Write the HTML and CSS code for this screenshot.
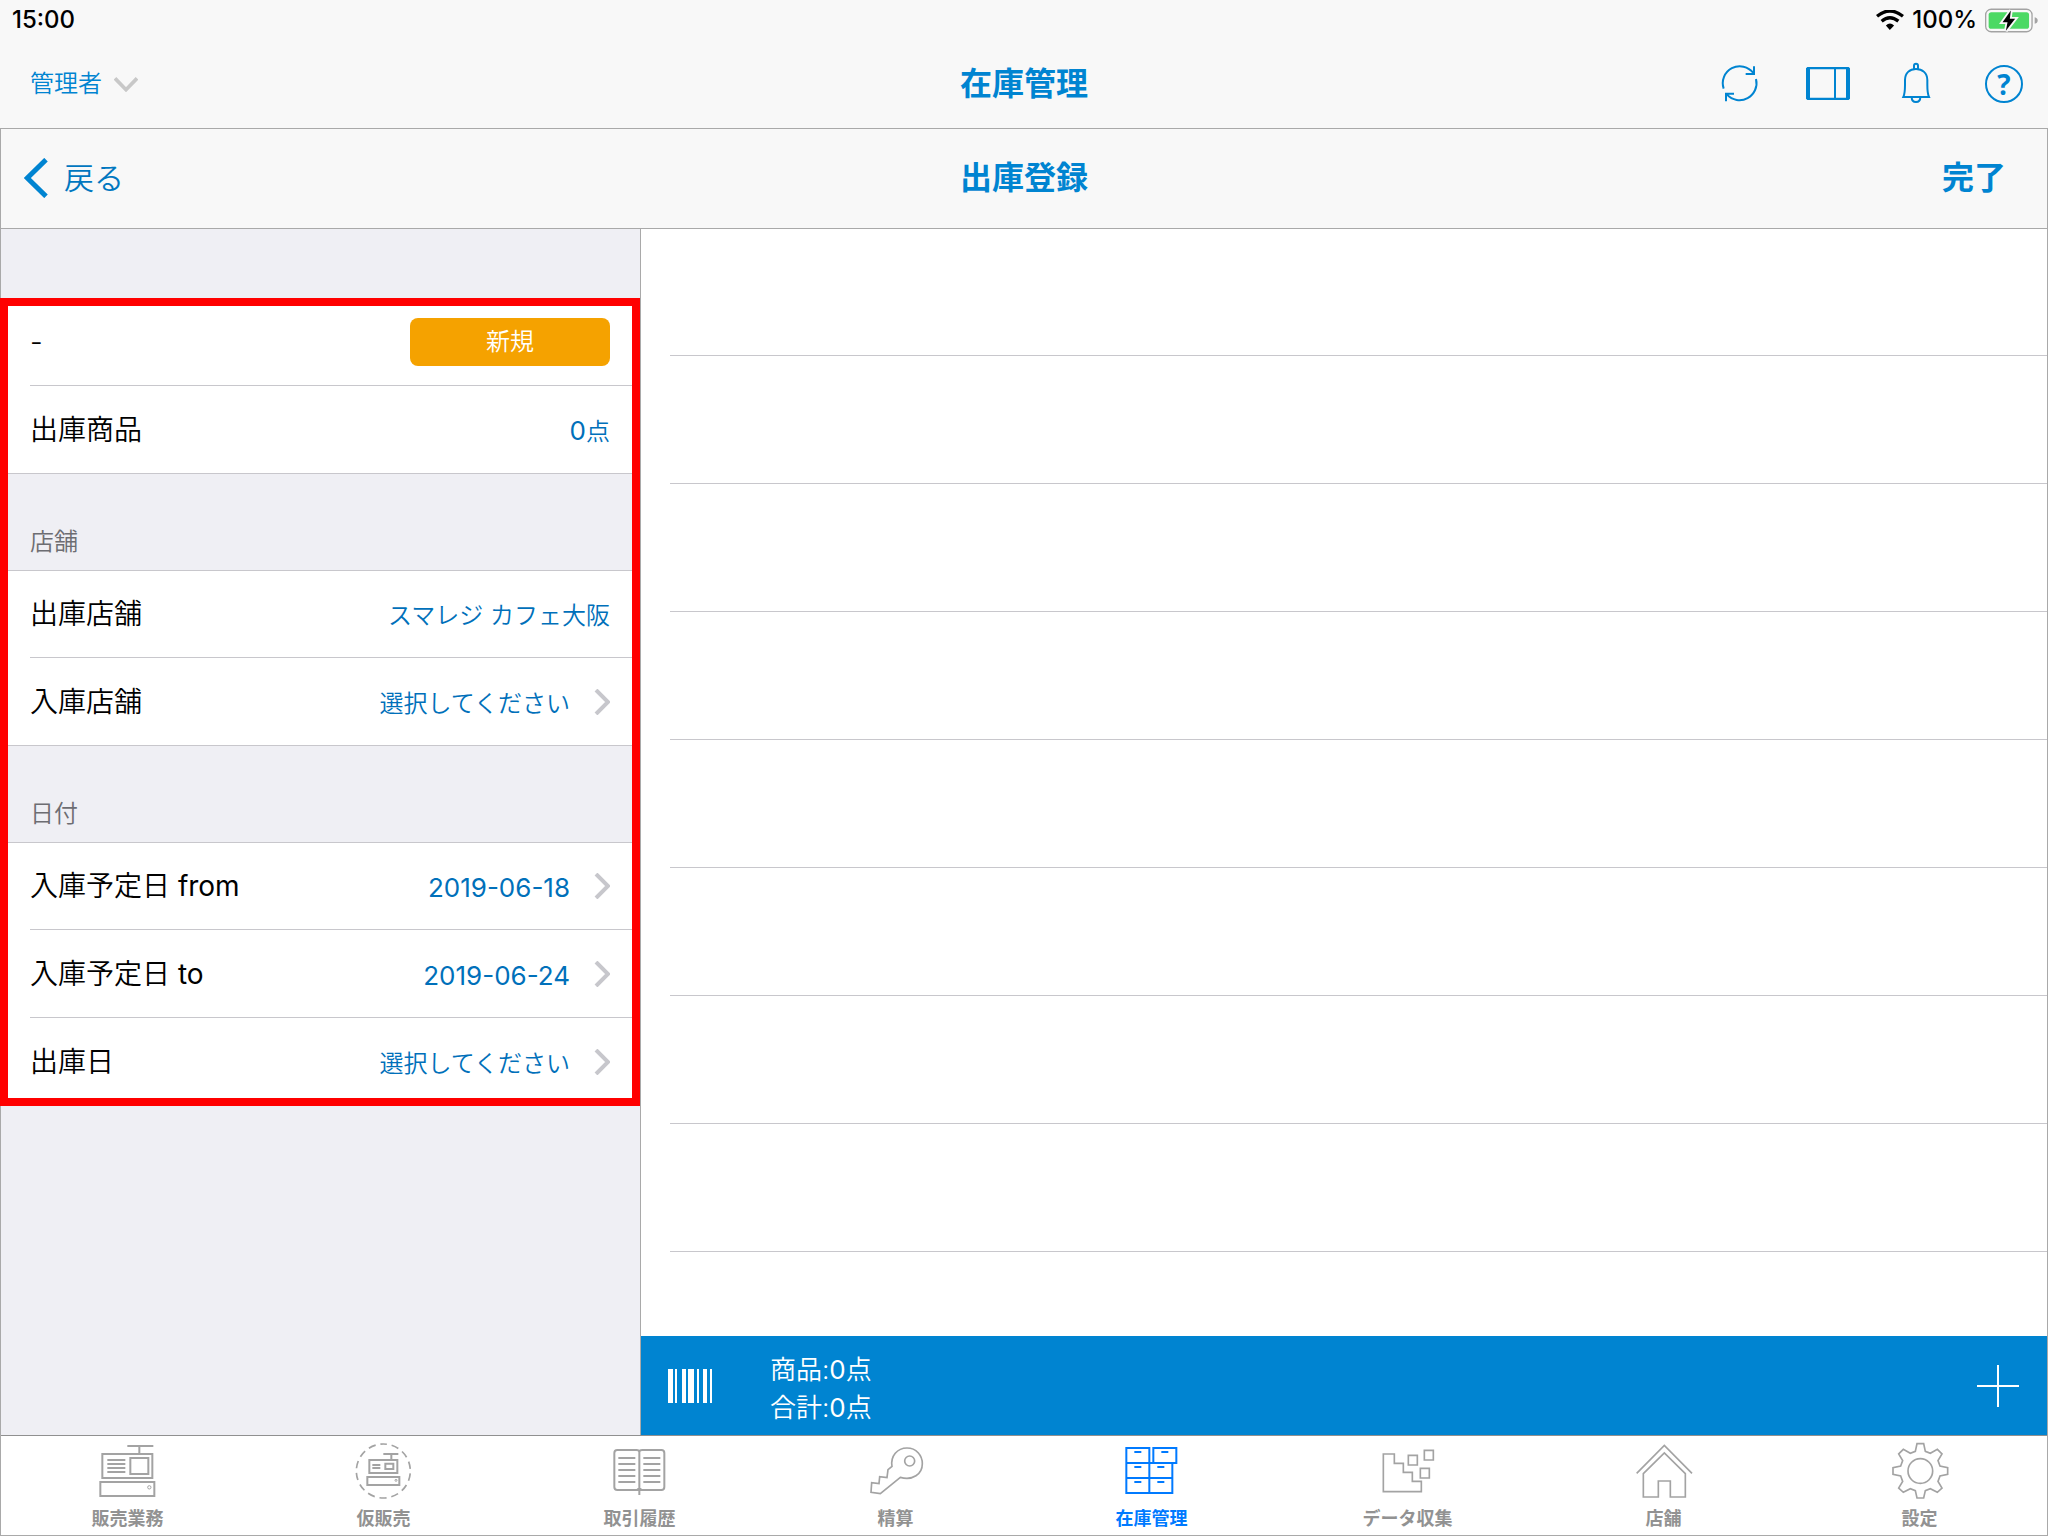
FILE: index.html
```html
<!DOCTYPE html>
<html lang="ja">
<head>
<meta charset="utf-8">
<meta name="viewport" content="width=device-width, initial-scale=1">
<title>在庫管理 - 出庫登録</title>
<link rel="stylesheet" href="styles.css">
</head>
<body>
<div class="app">
  <header class="top">
    <div class="status">
      <time class="clock">15:00</time>
      <div class="status-right">
        <svg class="wifi" viewBox="592 29 83 61" aria-hidden="true">
          <path d="M594 48Q633 16 673 48" fill="none" stroke="#000" stroke-width="10"/>
          <path d="M608 63Q633 42 659 63" fill="none" stroke="#000" stroke-width="10"/>
          <path d="M621 76Q633 65 646 76L633 90Z"/>
        </svg>
        <span class="percent">100%</span>
        <svg class="battery" viewBox="915 23 160 74" aria-hidden="true">
          <rect x="917" y="26" width="140" height="68" rx="17" fill="none" stroke="#a3a3a3" stroke-width="4"/>
          <path d="M1065 50Q1074 52 1074 60T1065 70Z" fill="#a3a3a3"/>
          <rect x="926" y="35" width="122" height="50" rx="8" fill="#4cd964"/>
          <path d="M993 30L968 65H983L978 91L1006 55H990Z" fill="#000" stroke="#f8f8f8" stroke-width="11" paint-order="stroke"/>
        </svg>
      </div>
    </div>
    <div class="toolbar">
      <div class="side">
        <button class="user" type="button">管理者
          <svg class="down" viewBox="342 231 72 45" aria-hidden="true"><path d="M345 235L378 269L411 235" fill="none" stroke="#c8c8c8" stroke-width="11"/></svg>
        </button>
      </div>
      <h1 class="title">在庫管理</h1>
      <div class="side tools">
        <button class="tool" type="button" aria-label="更新">
          <svg class="tool-icon" viewBox="120 192 120 120"><g fill="none" stroke="#0084d1" stroke-width="6"><path d="M131 266A51 51 0 0 1 220 219M228 237A51 51 0 0 1 141 284M222 199V222H197M138 304V281H162"/></g></svg>
        </button>
        <button class="tool" type="button" aria-label="パネル表示">
          <svg class="tool-icon wide" viewBox="378 192 132 120"><path fill="#0084d1" fill-rule="evenodd" d="M382 201H506L510 205V296L506 300H382L378 296V205ZM390 208V293H462V208ZM468 208V293H498V208Z"/></svg>
        </button>
        <button class="tool" type="button" aria-label="お知らせ">
          <svg class="tool-icon" viewBox="648 192 120 120"><g fill="none" stroke="#0084d1" stroke-width="6"><path d="M670 291C675 280 675 270 675 255V240C675 219 689 207 708 207S742 219 742 240V255C742 270 742 280 747 291ZM702 207V197Q702 191 708 191T714 197V207M695 291Q695 306 708 306T721 291"/></g></svg>
        </button>
        <button class="tool" type="button" aria-label="ヘルプ"><span class="help">?</span></button>
      </div>
    </div>
  </header>

  <div class="frame">
    <div class="navbar">
      <div class="side">
        <a class="back" href="#back">
          <svg class="back-icon" viewBox="72 474 72 120" aria-hidden="true"><path d="M138 479L82 534L138 589" fill="none" stroke="#0084d1" stroke-width="15"/></svg>戻る</a>
      </div>
      <h2 class="title">出庫登録</h2>
      <div class="side end"><button class="done" type="button">完了</button></div>
    </div>

    <div class="content">
      <aside class="sidebar">
        <div class="form">
          <div class="group">
            <div class="row"><span>-</span><button class="new" type="button">新規</button></div>
            <div class="row"><span>出庫商品</span><span class="value"><span class="num">0</span>点</span></div>
          </div>
          <h3 class="heading">店舗</h3>
          <div class="group">
            <div class="row"><span>出庫店舗</span><span class="value">スマレジ カフェ大阪</span></div>
            <button class="row" type="button"><span>入庫店舗</span><span class="value">選択してください</span><svg class="next" viewBox="0 0 16 26" aria-hidden="true"><path d="M2 1L14 13L2 25"/></svg></button>
          </div>
          <h3 class="heading">日付</h3>
          <div class="group">
            <button class="row" type="button"><span>入庫予定日 <span class="latin">from</span></span><span class="value num">2019-06-18</span><svg class="next" viewBox="0 0 16 26" aria-hidden="true"><path d="M2 1L14 13L2 25"/></svg></button>
            <button class="row" type="button"><span>入庫予定日 <span class="latin">to</span></span><span class="value num">2019-06-24</span><svg class="next" viewBox="0 0 16 26" aria-hidden="true"><path d="M2 1L14 13L2 25"/></svg></button>
            <button class="row" type="button"><span>出庫日</span><span class="value">選択してください</span><svg class="next" viewBox="0 0 16 26" aria-hidden="true"><path d="M2 1L14 13L2 25"/></svg></button>
          </div>
        </div>
      </aside>

      <main class="main">
        <ul class="items">
          <li></li><li></li><li></li><li></li><li></li><li></li><li></li><li></li>
        </ul>
        <div class="summary">
          <button class="icon-button" type="button" aria-label="バーコード">
            <svg class="barcode" viewBox="114 147 132 102"><path fill="#fff" d="M114 147h15v102h-15zM135 147h6v102h-6zM156 147h12v102h-12zM174 147h18v102h-18zM201 147h6v102h-6zM219 147h12v102h-12zM240 147h6v102h-6z"/></svg>
          </button>
          <div class="totals"><p>商品:<span class="latin">0</span>点</p><p>合計:<span class="latin">0</span>点</p></div>
          <button class="icon-button" type="button" aria-label="追加">
            <svg class="plus" viewBox="0 0 42 42"><path d="M21 0V42M0 21H42" stroke="#fff" stroke-width="2"/></svg>
          </button>
        </div>
      </main>
    </div>

    <nav class="tabs">
      <a class="tab" href="#sales">
        <svg class="tab-icon" viewBox="299 69 168 168"><path d="M381 78H459M417 78V100M306 102H456V174H306ZM390 114H444V162H390ZM321 120H375M321 132H375M321 144H375M321 156H375M300 186H462V228H300Z"/><circle cx="447" cy="202" r="5" stroke-width="3"/></svg>
        販売業務</a>
      <a class="tab" href="#hold">
        <svg class="tab-icon" viewBox="1067 69 168 168"><circle cx="1149" cy="153" r="81" stroke-width="5" stroke-dasharray="22 14.35" stroke-dashoffset="11" transform="rotate(-90 1149 153)"/><path d="M1149 102H1194M1173 102V118M1107 120H1191V159H1107ZM1155 131H1179V147H1155ZM1116 135H1140M1116 144H1140M1101 171H1197V195H1101Z"/><circle cx="1187" cy="181" r="3" stroke-width="3"/></svg>
        仮販売</a>
      <a class="tab" href="#history">
        <svg class="tab-icon" viewBox="299 69 168 168"><path d="M381 96Q381 90 372 90H315Q306 90 306 99V201Q306 210 315 210H447Q456 210 456 201V99Q456 90 447 90H390Q381 90 381 96V225M374 210L381 204L388 210M318 114H369M318 132H369M318 150H369M318 168H369M318 186H369M393 114H444M393 132H444M393 150H444M393 168H444M393 186H444"/></svg>
        取引履歴</a>
      <a class="tab" href="#close">
        <svg class="tab-icon" viewBox="1067 69 168 168"><g stroke-width="5"><path d="M1139 139C1134 108 1155 84 1184 84C1212 84 1230 106 1230 131C1230 162 1201 183 1164 172L1104 221L1076 217L1078 188L1100 191L1102 170L1124 173L1127 149Z"/><circle cx="1192" cy="123" r="15"/></g></svg>
        精算</a>
      <a class="tab active" href="#stock" aria-current="page">
        <svg class="tab-icon" viewBox="299 69 168 168"><path d="M306 84H375V219H306ZM387 84H456V129H387ZM306 129H387M306 174H444M375 219H444V129M330 96H351M411 96H432M330 141H351M399 141H420M330 186H351M399 186H420"/></svg>
        在庫管理</a>
      <a class="tab" href="#data">
        <svg class="tab-icon" viewBox="1067 69 168 168"><path d="M1077 102H1110V130H1137V157H1164V184H1191V215H1077ZM1152 106H1179V135H1152ZM1200 91H1227V120H1200ZM1188 145H1215V174H1188Z" stroke-width="5"/></svg>
        データ収集</a>
      <a class="tab" href="#store">
        <svg class="tab-icon" viewBox="299 69 168 168"><path d="M301 160L384 76L467 160M321 231V161L384 99L447 161V231H402V183H366V231Z" stroke-width="5"/></svg>
        店舗</a>
      <a class="tab" href="#settings">
        <svg class="tab-icon" viewBox="1067 69 168 168"><g stroke-width="5"><path d="M1142 71H1162L1167 94L1182 100L1203 88L1217 102L1205 122L1211 138L1234 143V163L1211 168L1205 184L1217 204L1203 217L1182 206L1167 212L1162 234H1142L1137 212L1122 206L1101 217L1087 204L1099 184L1093 168L1070 163V143L1093 138L1099 122L1087 102L1101 88L1122 100L1137 94Z"/><circle cx="1152" cy="153" r="37"/></g></svg>
        設定</a>
    </nav>
  </div>
</div>
</body>
</html>
```

FILE: styles.css
```css
* { box-sizing: border-box; }

body {
  margin: 0;
  background: #fff;
  color: #000;
  font-family: "Inter", "Noto Sans CJK JP", sans-serif;
  font-size: 28px;
  font-weight: 350;
  line-height: 40px;
}

h1, h2, h3, p, ul { margin: 0; padding: 0; font-weight: inherit; }
ul { list-style: none; }
a { color: inherit; text-decoration: none; }
svg { display: block; flex: none; }

button {
  margin: 0;
  padding: 0;
  border: 0;
  background: none;
  color: inherit;
  font: inherit;
  cursor: pointer;
}

.app {
  display: flex;
  flex-direction: column;
  min-height: 100vh;
}

/* Status line and app toolbar */
.top { background: #f8f8f8; }

.status {
  display: flex;
  justify-content: space-between;
  align-items: center;
  height: 40px;
  padding: 0 10px 0 12px;
  font-size: 24px;
  font-weight: 500;
}

.status-right { display: flex; align-items: center; gap: 8px; }
.wifi { width: 28px; height: 20px; }
.battery { width: 53px; height: 25px; }

.toolbar, .navbar {
  display: grid;
  grid-template-columns: 1fr auto 1fr;
  align-items: center;
  color: #0084d1;
}

.toolbar { height: 88px; }
.side { display: flex; align-items: center; }
.end, .tools { justify-content: flex-end; }
.title { font-size: 32px; font-weight: 700; line-height: 48px; }

.user {
  display: flex;
  align-items: center;
  gap: 12px;
  padding-left: 30px;
  font-size: 24px;
}

.down { width: 24px; height: 15px; }

.tool { display: flex; align-items: center; justify-content: center; width: 88px; height: 88px; }
.tool-icon { width: 40px; height: 40px; overflow: visible; }
.tool-icon.wide { width: 44px; }

.help {
  width: 38px;
  height: 38px;
  border: 2px solid #0084d1;
  border-radius: 50%;
  font: 700 28px/34px "Open Sans", sans-serif;
  text-align: center;
}

/* Bordered working area */
.frame {
  position: relative;
  display: flex;
  flex: 1;
  flex-direction: column;
}

.frame::after {
  content: "";
  position: absolute;
  inset: 0;
  border: 1px solid #a9a9a9;
  pointer-events: none;
}

.navbar {
  height: 101px;
  padding-bottom: 1px;
  border-top: 1px solid #a9a9a9;
  border-bottom: 1px solid #a9a9a9;
  background: #f8f8f8;
}

.back {
  display: flex;
  align-items: center;
  gap: 16px;
  padding-left: 24px;
  color: #0077c0;
  font-size: 30px;
}

.back-icon { width: 24px; height: 40px; }
.done { padding-right: 42px; font-size: 32px; font-weight: 700; }

.content {
  display: grid;
  flex: 1;
  grid-template-columns: 641px 1fr;
}

/* Form column */
.sidebar {
  padding-top: 69px;
  border-right: 1px solid #a9a9a9;
  background: #efeff4;
}

.form { position: relative; z-index: 1; }

.form::after {
  content: "";
  position: absolute;
  inset: 0;
  border: 8px solid #f00;
  pointer-events: none;
}

.group {
  display: grid;
  grid-auto-rows: 88px;
  background: #fff;
  box-shadow: inset 0 1px #c8c7cc, inset 0 -1px #c8c7cc;
}

.row {
  display: flex;
  align-items: center;
  margin-left: 30px;
  padding-right: 30px;
  border-bottom: 1px solid #c8c7cc;
  line-height: 42px;
  text-align: left;
}

.row > :first-child { flex: 1; }
.value { color: #0070ba; font-size: 24px; padding-top: 4px; }
.num { font-size: 26px; font-weight: 400; }
.latin { font-weight: 400; }

.new {
  width: 200px;
  height: 48px;
  border-radius: 8px;
  background: #f5a200;
  color: #fff;
  font-size: 24px;
}

.next {
  width: 16px;
  height: 26px;
  margin-left: 24px;
  fill: none;
  stroke: #c7c7cc;
  stroke-width: 4;
}

.heading {
  display: flex;
  align-items: flex-end;
  height: 96px;
  padding: 0 30px 10px;
  color: #6d6d72;
  font-size: 24px;
  line-height: 36px;
}

/* Item list and totals */
.main { display: flex; flex-direction: column; min-width: 0; }
.items { flex: 1; padding-left: 29px; }
.items li { height: 128px; border-bottom: 1px solid #c8c7cc; }
.items li:first-child { height: 127px; }

.summary {
  display: flex;
  align-items: center;
  height: 99px;
  padding: 0 29px 0 27px;
  background: #0084d1;
  color: #fff;
  font-size: 26px;
  line-height: 38px;
}

.totals { flex: 1; padding: 6px 0 0 58px; }
.barcode { width: 44px; height: 34px; }
.plus { width: 42px; height: 42px; }

/* Bottom tabs */
.tabs {
  display: grid;
  grid-template-columns: repeat(8, 1fr);
  height: 101px;
  border-top: 1px solid #909090;
  background: #fff;
}

.tab {
  display: flex;
  flex-direction: column;
  align-items: center;
  gap: 6px;
  padding: 7px 1px 0 0;
  color: #929292;
  font-size: 18px;
  font-weight: 700;
  line-height: 28px;
}

.tab-icon {
  width: 56px;
  height: 56px;
  overflow: visible;
  fill: none;
  stroke: #a3a3a3;
  stroke-width: 6;
}

.active { color: #007aff; }
.active .tab-icon { stroke: #007aff; }
```
